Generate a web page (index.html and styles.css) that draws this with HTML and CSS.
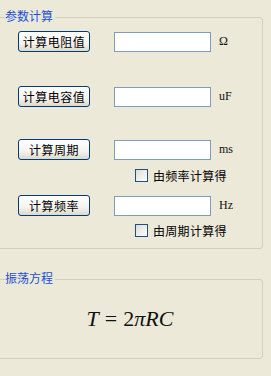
FILE: index.html
```html
<!DOCTYPE html>
<html lang="zh">
<head>
    <meta charset="UTF-8">
    <title>参数计算</title>
    <link rel="stylesheet" href="styles.css">
</head>
<body>
<fieldset class="group calc">
    <legend>参数计算</legend>

    <div class="row first">
        <button class="btn">计算电阻值</button>
        <input class="field" type="text">
        <span class="unit">Ω</span>
    </div>

    <div class="row second">
        <button class="btn">计算电容值</button>
        <input class="field" type="text">
        <span class="unit">uF</span>
    </div>

    <div class="row third">
        <button class="btn">计算周期</button>
        <input class="field" type="text">
        <span class="unit">ms</span>
    </div>
    <label class="check check1"><span class="box"></span>由频率计算得</label>

    <div class="row fourth">
        <button class="btn">计算频率</button>
        <input class="field" type="text">
        <span class="unit">Hz</span>
    </div>
    <label class="check check2"><span class="box"></span>由周期计算得</label>
</fieldset>

<fieldset class="group formula-box">
    <legend>振荡方程</legend>
    <div class="formula"><i>T</i><span class="eq">=</span>2<i>πRC</i></div>
</fieldset>
</body>
</html>
```

FILE: styles.css
```css
body {
    margin: 0;
    background: #ece9d8;
    font-family: "Noto Sans CJK SC", "Liberation Sans", sans-serif;
    font-size: 12px;
    width: 271px;
    height: 376px;
    overflow: hidden;
}

/* group boxes */
.group {
    margin: 9px 0 0 -3px;
    width: 266px;
    box-sizing: border-box;
    border: 1px solid #d0d0bf;
    border-radius: 3px;
    padding: 6px 0 11px 7px;
}
.group legend {
    padding: 0 2px 2px 0;
    color: #1a4fd6;
    font-size: 12px;
    line-height: 14px;
}

.row {
    display: flex;
    align-items: center;
    height: 21px;
}
.second { margin-top: 34px; }
.third { margin-top: 32px; }
.fourth { margin-top: 13px; }

.btn {
    margin: 0 0 0 13px;
    width: 72px;
    height: 21px;
    padding: 0;
    border: 1px solid #003c74;
    border-radius: 3px;
    background: linear-gradient(#ffffff, #f4f3ee 60%, #dcd9cb);
    font-family: "Noto Sans CJK SC", sans-serif;
    font-size: 12px;
    line-height: 18px;
    letter-spacing: 0.5px;
    color: #000;
}

.field {
    margin-left: 24px;
    width: 97px;
    height: 20px;
    box-sizing: border-box;
    border: 1px solid #7f9db9;
    background: #fff;
    padding: 0;
}

.unit {
    margin-left: 8px;
    font-family: "Liberation Serif", serif;
    font-size: 12px;
    color: #111;
}

.check {
    display: flex;
    align-items: center;
    height: 13px;
    padding-left: 130px;
    color: #000;
    font-size: 12px;
    letter-spacing: 0.3px;
}
.check1 { margin-top: 9px; }
.check2 { margin-top: 8px; }
.box {
    width: 13px;
    height: 13px;
    box-sizing: border-box;
    border: 1px solid #1c5180;
    background: linear-gradient(135deg, #dcdcd7, #ffffff);
    margin-right: 5px;
}

/* formula */
.formula-box {
    margin-top: 22px;
    padding: 19px 0 26px 7px;
}
.formula {
    text-align: center;
    padding-right: 7px;
    font-family: "Liberation Serif", serif;
    font-size: 22px;
    line-height: 26px;
    color: #111;
}
.eq {
    margin: 0 6px;
}
```
